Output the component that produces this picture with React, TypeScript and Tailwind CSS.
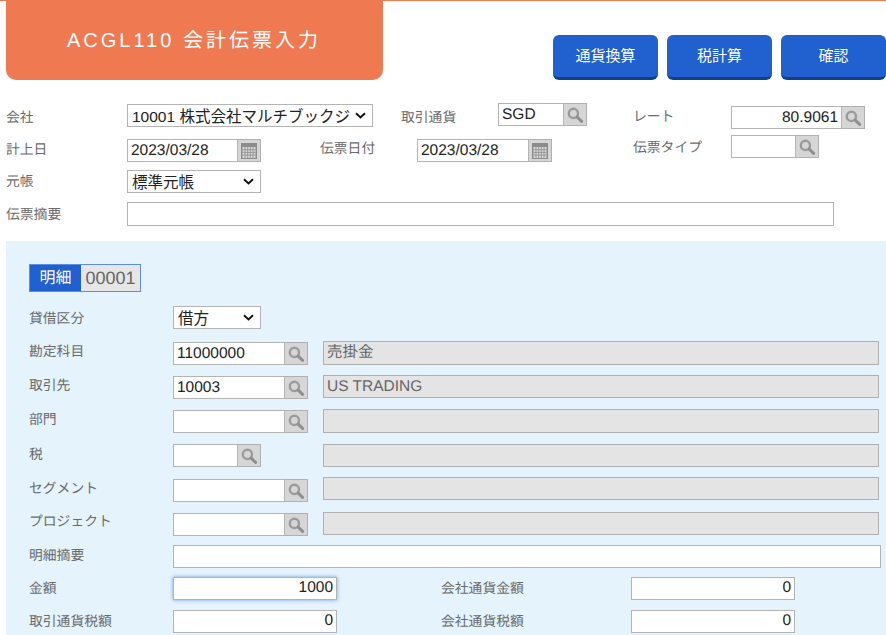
import React from 'react';

const FONT = '[font-family:Liberation_Sans,Noto_Sans_CJK_JP,sans-serif]';

const SearchIcon = () => (
  <svg width="18" height="18" viewBox="0 0 18 18" fill="none">
    <circle cx="7.4" cy="7.4" r="4.6" stroke="#9b9b9b" strokeWidth="2.4" />
    <path d="M11.2 11.2l4.4 4.2" stroke="#8f8f8f" strokeWidth="3" strokeLinecap="round" />
  </svg>
);

const CalendarIcon = () => (
  <svg width="18" height="18" viewBox="0 0 18 18">
    <rect x="1" y="1" width="16" height="16" fill="#8c8c8c" />
    <rect x="2.5" y="5" width="13" height="11" fill="#d8d8d8" />
    <path
      d="M5 5v11M7.7 5v11M10.3 5v11M13 5v11M2.5 7.7h13M2.5 10.4h13M2.5 13.1h13"
      stroke="#8c8c8c"
      strokeWidth="0.8"
    />
  </svg>
);

const Label = ({ text, className = '' }: { text: string; className?: string }) => (
  <div className={`h-[21px] pt-px leading-5 shrink-0 whitespace-nowrap text-[13.8px] text-[#6b6b6b] ${className}`}>
    {text}
  </div>
);

const inputBase =
  'h-full min-w-0 bg-white border border-[#b4b4b4] px-[3px] text-[15.5px] text-[#222222] outline-none [font-family:Liberation_Sans,Noto_Sans_CJK_JP,sans-serif] [text-rendering:geometricPrecision]';

const TextBox = ({
  value = '',
  right,
  focus,
  className = '',
}: {
  value?: string;
  right?: boolean;
  focus?: boolean;
  className?: string;
}) => (
  <div className={`h-[23px] shrink-0 ${className}`}>
    <input
      readOnly
      value={value}
      className={`w-full ${inputBase} ${right ? 'text-right' : ''} ${
        focus ? 'border-[#8db3dc] shadow-[0_0_4px_#6f9fd8]' : ''
      }`}
    />
  </div>
);

// 入力欄 + 検索/カレンダーボタン
const Lookup = ({
  value = '',
  right,
  calendar,
  inputW,
  className = '',
}: {
  value?: string;
  right?: boolean;
  calendar?: boolean;
  inputW: string;
  className?: string;
}) => (
  <div className={`flex h-[23px] shrink-0 ${className}`}>
    <input readOnly value={value} className={`${inputW} ${inputBase} ${right ? 'text-right' : ''}`} />
    <button className="w-[23px] h-full flex items-center justify-center bg-[#d6d6d6] border border-l-0 border-[#b0b0b0]">
      {calendar ? <CalendarIcon /> : <SearchIcon />}
    </button>
  </div>
);

const Select = ({ value, className = '' }: { value: string; className?: string }) => (
  <div className={`relative h-[23px] shrink-0 ${className}`}>
    <select
      defaultValue={value}
      className={`w-full h-full appearance-none bg-white border border-[#b4b4b4] pl-[4px] pr-[21px] text-[15.5px] text-[#222222] outline-none ${FONT}`}
    >
      <option>{value}</option>
    </select>
    <svg
      width="11"
      height="7"
      viewBox="0 0 11 7"
      fill="none"
      className="absolute right-[7px] top-[8px] pointer-events-none"
    >
      <path d="M1 1.2l4.5 4.3L10 1.2" stroke="#111111" strokeWidth="1.9" />
    </svg>
  </div>
);

const ReadOnlyBox = ({ value = '', className = '' }: { value?: string; className?: string }) => (
  <div
    className={`w-[556px] shrink-0 bg-[#e4e4e4] border border-[#b0b0b0] px-[3px] text-[15.5px] leading-[21px] text-[#666666] ${className}`}
  >
    {value}
  </div>
);

const HeaderButton = ({ text }: { text: string }) => (
  <button className="w-[105px] h-[45px] rounded-[6px] bg-[#2060cf] border-b-[3px] border-[#143f86] text-[15px] text-white">
    {text}
  </button>
);

export default function App() {
  return (
    <div
      className={`h-[635px] w-[886px] overflow-hidden bg-white flex flex-col border-t border-[#ef7a52] [text-rendering:geometricPrecision] ${FONT}`}
    >
      {/* ヘッダー */}
      <div className="flex h-[79px] pl-[6px] shrink-0">
        <div className="w-[377px] h-[79px] pl-[61px] pt-[26px] bg-[#ef7a52] rounded-b-[10px] text-[20px] leading-[28px] tracking-[3px] text-white whitespace-nowrap">
          ACGL110 会計伝票入力
        </div>
        <div className="ml-auto flex gap-[9px] pt-[34px]">
          <HeaderButton text="通貨換算" />
          <HeaderButton text="税計算" />
          <HeaderButton text="確認" />
        </div>
      </div>

      {/* 伝票ヘッダー */}
      <div className="flex h-[32px] pl-[6px] mt-[23px] shrink-0">
        <Label text="会社" className="w-[121px] mt-[4px]" />
        <Select value="10001 株式会社マルチブックジャパン" className="w-[246px] mt-[1px]" />
        <Label text="取引通貨" className="w-[97px] ml-[28px] mt-[4px]" />
        <Lookup value="SGD" inputW="w-[66px]" />
        <Label text="レート" className="w-[98px] ml-[46px] mt-[3px]" />
        <Lookup value="80.9061" right inputW="w-[111px]" className="mt-[3px]" />
      </div>
      <div className="flex h-[35px] pl-[6px] shrink-0">
        <Label text="計上日" className="w-[121px] mt-[4px]" />
        <Lookup value="2023/03/28" calendar inputW="w-[111px]" className="mt-[4px]" />
        <Label text="伝票日付" className="w-[97px] ml-[59px] mt-[3px]" />
        <Lookup value="2023/03/28" calendar inputW="w-[112px]" className="mt-[4px]" />
        <Label text="伝票タイプ" className="w-[98px] ml-[81px] mt-[2px]" />
        <Lookup inputW="w-[65px]" />
      </div>
      <div className="flex h-[32px] pl-[6px] shrink-0">
        <Label text="元帳" className="w-[121px] mt-[1px]" />
        <Select value="標準元帳" className="w-[134px]" />
      </div>
      <div className="flex h-[24px] pl-[6px] shrink-0">
        <Label text="伝票摘要" className="w-[121px] mt-[2px]" />
        <TextBox className="w-[707px] !h-[24px]" />
      </div>

      {/* 明細 */}
      <div className="flex-1 ml-[6px] mt-[15px] pl-[23px] pt-[23px] bg-[#e5f3fd]">
        <div className="flex w-[112px] h-[28px] border border-[#5b8fdc] mb-[14px]">
          <div className="w-[51px] bg-[#2060cf] text-white text-[16px] leading-[27px] text-center">明細</div>
          <div className="flex-1 bg-[#e6e6e6] text-[#666666] text-[18px] leading-[27px] text-center">00001</div>
        </div>

        <div className="flex h-[35px]">
          <Label text="貸借区分" className="w-[144px] mt-[2px]" />
          <Select value="借方" className="w-[88px]" />
        </div>
        <div className="flex h-[34px]">
          <Label text="勘定科目" className="w-[144px]" />
          <Lookup value="11000000" inputW="w-[112px]" className="mt-[1px]" />
          <ReadOnlyBox value="売掛金" className="ml-[15px] h-[24px]" />
        </div>
        <div className="flex h-[34px]">
          <Label text="取引先" className="w-[144px]" />
          <Lookup value="10003" inputW="w-[112px]" className="mt-[1px]" />
          <ReadOnlyBox value="US TRADING" className="ml-[15px] h-[23px]" />
        </div>
        <div className="flex h-[35px]">
          <Label text="部門" className="w-[144px]" />
          <Lookup inputW="w-[112px]" className="mt-[1px]" />
          <ReadOnlyBox className="ml-[15px] h-[24px]" />
        </div>
        <div className="flex h-[33px]">
          <Label text="税" className="w-[144px]" />
          <Lookup inputW="w-[65px]" />
          <ReadOnlyBox className="ml-[62px] h-[23px]" />
        </div>
        <div className="flex h-[34px]">
          <Label text="セグメント" className="w-[144px] mt-[1px]" />
          <Lookup inputW="w-[112px]" className="mt-[2px]" />
          <ReadOnlyBox className="ml-[15px] h-[23px]" />
        </div>
        <div className="flex h-[33px]">
          <Label text="プロジェクト" className="w-[144px]" />
          <Lookup inputW="w-[112px]" className="mt-[2px]" />
          <ReadOnlyBox className="ml-[15px] mt-[1px] h-[23px]" />
        </div>
        <div className="flex h-[32px]">
          <Label text="明細摘要" className="w-[144px] mt-[1px]" />
          <TextBox className="w-[708px]" />
        </div>
        <div className="flex h-[33px]">
          <Label text="金額" className="w-[144px] mt-[2px]" />
          <TextBox value="1000" right focus className="w-[164px]" />
          <Label text="会社通貨金額" className="w-[190px] ml-[104px] mt-[2px]" />
          <TextBox value="0" right className="w-[164px]" />
        </div>
        <div className="flex h-[26px]">
          <Label text="取引通貨税額" className="w-[144px] mt-[2px]" />
          <TextBox value="0" right className="w-[164px]" />
          <Label text="会社通貨税額" className="w-[190px] ml-[104px] mt-[2px]" />
          <TextBox value="0" right className="w-[164px]" />
        </div>
      </div>
    </div>
  );
}
